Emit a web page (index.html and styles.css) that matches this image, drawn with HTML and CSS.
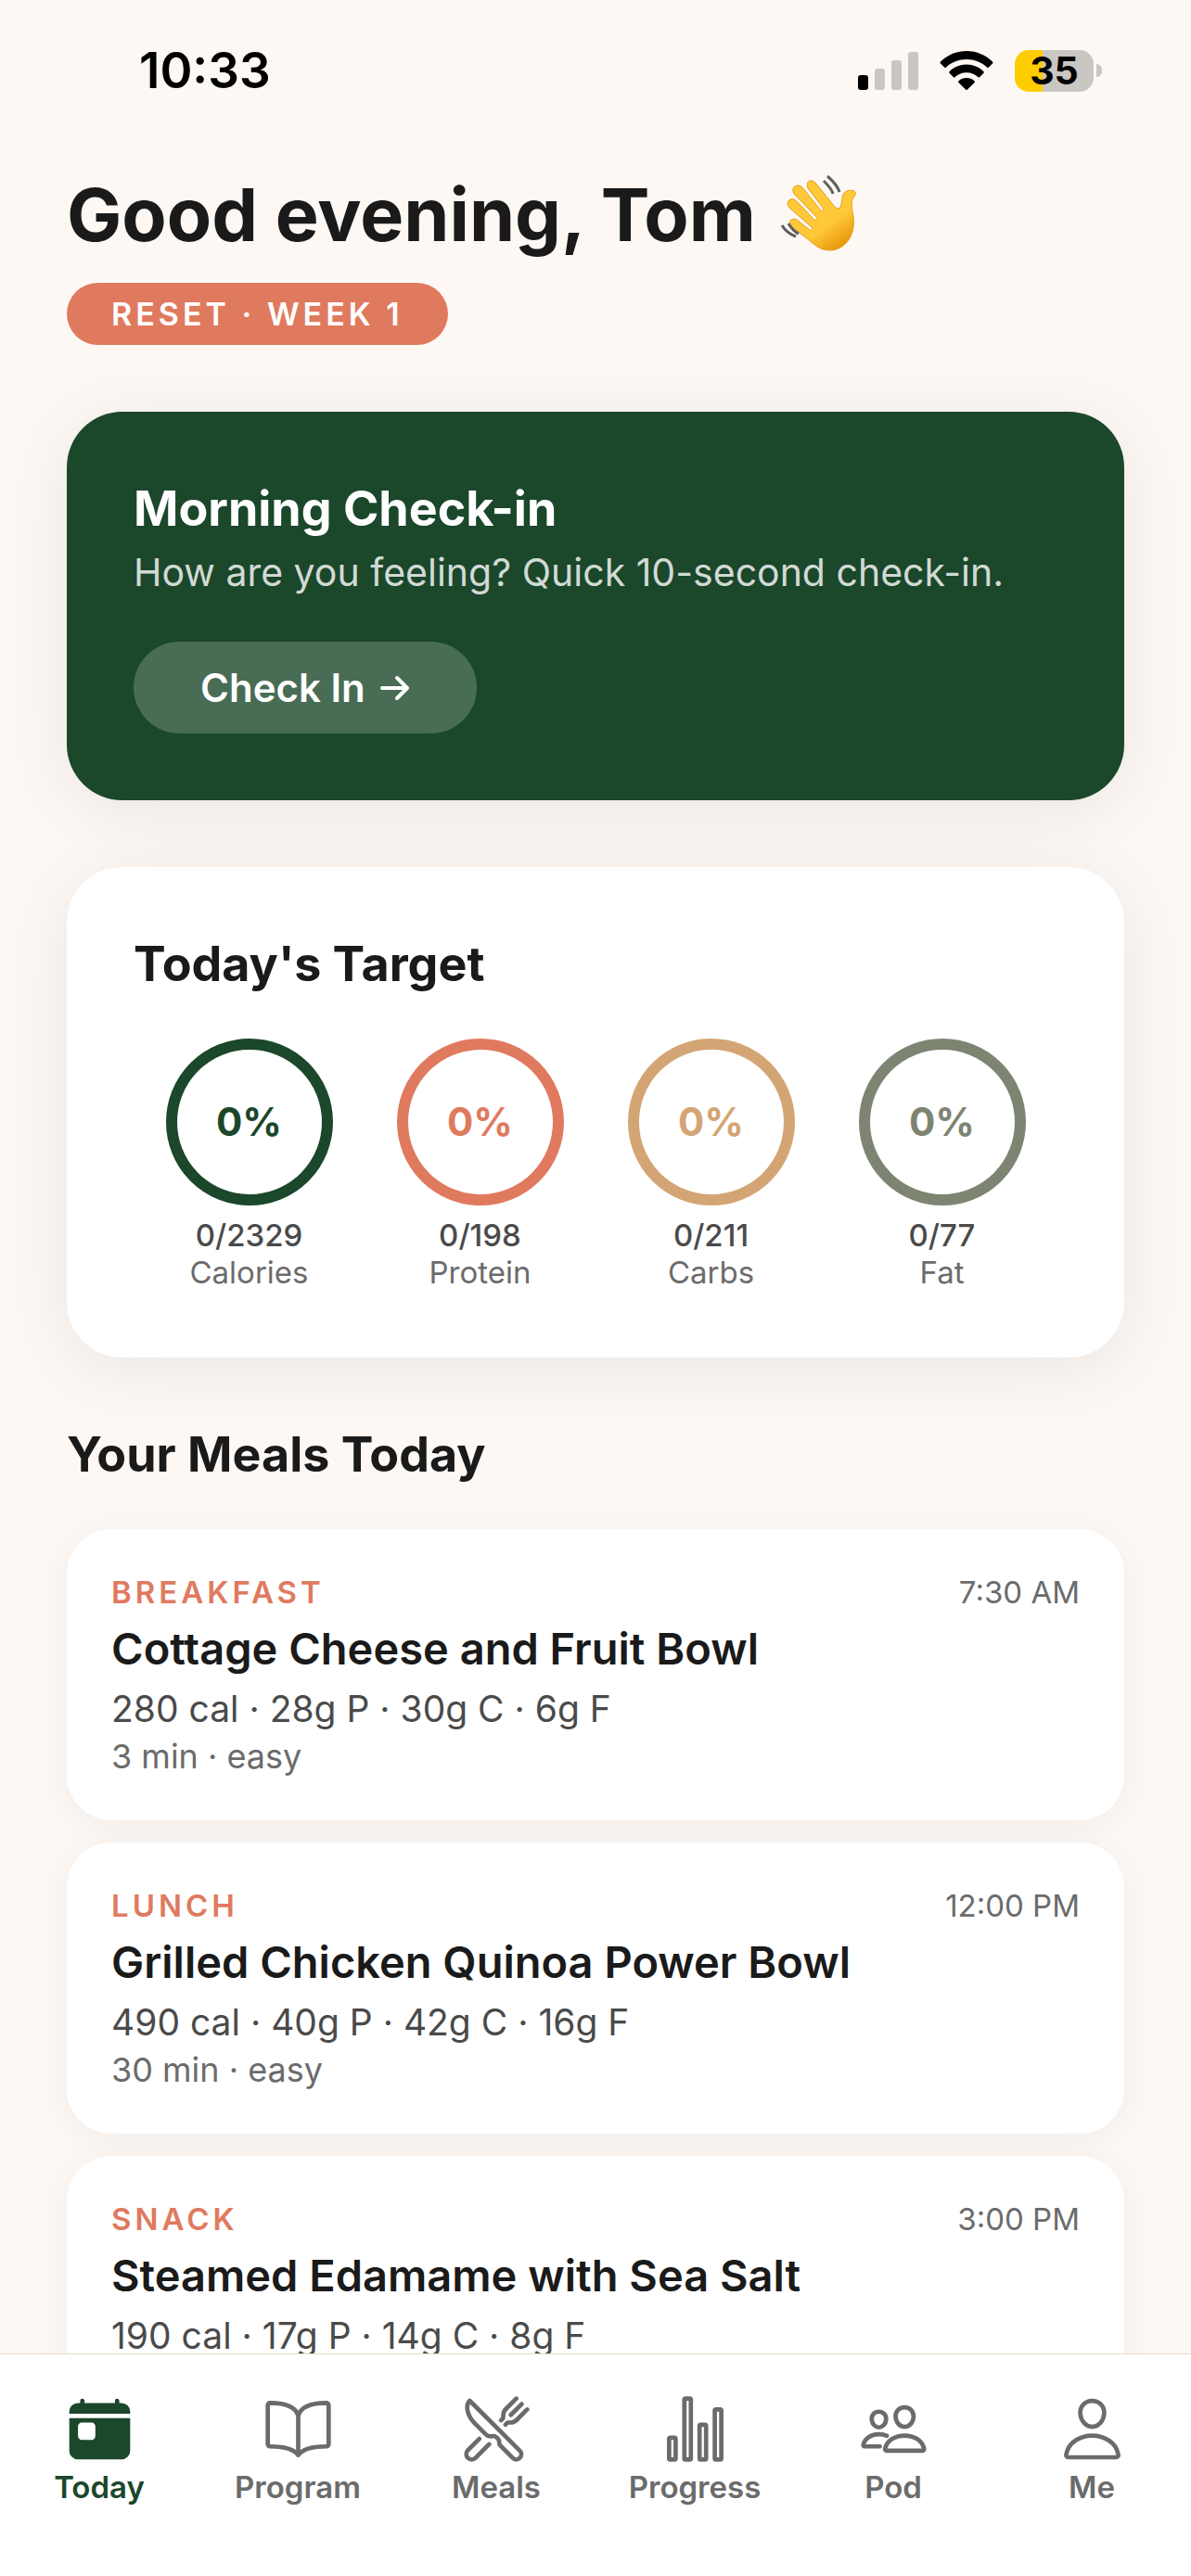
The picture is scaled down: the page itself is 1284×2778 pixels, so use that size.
FILE: index.html
```html
<!DOCTYPE html>
<html lang="en">
<head>
  <meta charset="UTF-8" />
  <meta name="viewport" content="width=device-width, initial-scale=1.0"/>
  <title>Today</title>
  <link rel="stylesheet" href="styles.css">
</head>
<body>
  <div class="app">
    <div class="status-bar">
      <span class="clock">10:33</span>
      <div class="status-icons">
        <svg class="signal" viewBox="0 0 65 41" aria-hidden="true">
          <rect class="on" x="0" y="25" width="11" height="16" rx="3"/>
          <rect x="18" y="18" width="11" height="23" rx="3"/>
          <rect x="36" y="9" width="11" height="32" rx="3"/>
          <rect x="54" y="0" width="11" height="41" rx="3"/>
        </svg>
        <svg class="wifi" viewBox="0 0 58 42" aria-hidden="true">
          <path d="M29 0C40 0 50 4.500 57 11.500Q58 12.500 57 13.500L53 17.500Q52 18.500 51 17.500C45 12 37.500 9 29 9S13 12 7 17.500Q6 18.500 5 17.500L1 13.500Q0 12.500 1 11.500C8 4.500 18 0 29 0Z"/>
          <path d="M29 14.500C36 14.500 42.500 17.300 47.300 22Q48.300 23 47.300 24L43.300 28Q42.300 29 41.300 28C38 25 33.700 23.300 29 23.300S20 25 16.700 28Q15.700 29 14.700 28L10.700 24Q9.700 23 10.700 22C15.500 17.300 22 14.500 29 14.500Z"/>
          <path d="M29 29C32.200 29 35.200 30.200 37.400 32.200Q38.400 33.200 37.400 34.200L30 41.500Q29 42.500 28 41.500L20.600 34.200Q19.600 33.200 20.600 32.200C22.800 30.200 25.800 29 29 29Z"/>
        </svg>
        <div class="battery"><span class="battery-level">35</span></div>
      </div>
    </div>

    <main class="content">
      <h1 class="greeting">Good evening, Tom
        <svg class="wave" viewBox="0 -6 84 84" role="img" aria-label="waving hand">
          <defs>
            <linearGradient id="skin" x1="0" y1="0" x2="0.7" y2="1">
              <stop offset="0" stop-color="#ffc935"/>
              <stop offset="0.7" stop-color="#ffc83a"/>
              <stop offset="1" stop-color="#e89a0c"/>
            </linearGradient>
          </defs>
          <path fill="url(#skin)" stroke="#e5a01c" stroke-width="1" d="M14 49C10 45 14 38.500 20 42L34 53C36 54 37.500 52 36 50L12 29C7 23 13 17 19 21L39 42C41 43 43 41 41 39L17 14C13 7 20 2 26 7L46 32C48 33 50 31 48 29L32 8C29 1 35-3 40 2L57 23C61 29 65 32 67 28C70 22 67 14 74 11C80 9 85 11 83 15C78 21 79 26 80 33C84 50 79 63 70 70C61 77 50 76 42 71Z"/>
          <path class="motion" d="M49 0C54 5 58 9 59 14M53-5C59 0 64 6 66 12M4 48C7 53 11 57 19 60M11 46C14 51 17 55 22 57"/>
        </svg>
      </h1>
      <span class="badge">RESET · WEEK 1</span>

      <section class="card checkin">
        <h2 class="checkin-title">Morning Check-in</h2>
        <p class="checkin-text">How are you feeling? Quick 10-second check-in.</p>
        <button type="button" class="checkin-btn">Check In
          <svg class="arrow" viewBox="0 0 32 30" aria-hidden="true"><path d="M2 15H29M18 4L29 15L18 26"/></svg>
        </button>
      </section>

      <section class="card">
        <h2 class="section-title">Today's Target</h2>
        <div class="rings">
          <div class="macro">
            <div class="ring green">0%</div>
            <span class="macro-value">0/2329</span>
            <span class="macro-label">Calories</span>
          </div>
          <div class="macro">
            <div class="ring coral">0%</div>
            <span class="macro-value">0/198</span>
            <span class="macro-label">Protein</span>
          </div>
          <div class="macro">
            <div class="ring sand">0%</div>
            <span class="macro-value">0/211</span>
            <span class="macro-label">Carbs</span>
          </div>
          <div class="macro">
            <div class="ring sage">0%</div>
            <span class="macro-value">0/77</span>
            <span class="macro-label">Fat</span>
          </div>
        </div>
      </section>

      <section class="meals">
        <h2 class="section-title">Your Meals Today</h2>
        <div class="meal-list">
          <article class="meal">
            <div class="meal-top">
              <span class="meal-type">BREAKFAST</span>
              <span class="meal-time">7:30 AM</span>
            </div>
            <h3 class="meal-name">Cottage Cheese and Fruit Bowl</h3>
            <p class="meal-macros">280 cal · 28g P · 30g C · 6g F</p>
            <p class="meal-prep">3 min · easy</p>
          </article>
          <article class="meal">
            <div class="meal-top">
              <span class="meal-type">LUNCH</span>
              <span class="meal-time">12:00 PM</span>
            </div>
            <h3 class="meal-name">Grilled Chicken Quinoa Power Bowl</h3>
            <p class="meal-macros">490 cal · 40g P · 42g C · 16g F</p>
            <p class="meal-prep">30 min · easy</p>
          </article>
          <article class="meal">
            <div class="meal-top">
              <span class="meal-type">SNACK</span>
              <span class="meal-time">3:00 PM</span>
            </div>
            <h3 class="meal-name">Steamed Edamame with Sea Salt</h3>
            <p class="meal-macros">190 cal · 17g P · 14g C · 8g F</p>
          </article>
        </div>
      </section>
    </main>

    <nav class="tab-bar">
      <a href="#today" class="tab active">
        <svg class="tab-icon filled" viewBox="0 0 512 512" aria-hidden="true">
          <path d="M416 64h-16V48.450c0-8.610-6.620-16-15.230-16.430A16 16 0 00368 48v16H144V48.450c0-8.610-6.620-16-15.230-16.430A16 16 0 00112 48v16H96a64 64 0 00-64 64v12a4 4 0 004 4h440a4 4 0 004-4v-12a64 64 0 00-64-64zM477 176H35a3 3 0 00-3 3v237a64 64 0 0064 64h320a64 64 0 0064-64V179a3 3 0 00-3-3zM224 307.430A28.570 28.570 0 01195.430 336h-70.860A28.570 28.570 0 0196 307.430v-70.860A28.570 28.570 0 01124.570 208h70.860A28.570 28.570 0 01224 236.570z"/>
        </svg>
        Today
      </a>
      <a href="#program" class="tab">
        <svg class="tab-icon" viewBox="0 0 512 512" aria-hidden="true">
          <path d="M256 160c16-63.160 76.430-95.410 208-96a15.940 15.940 0 0116 16v288a16 16 0 01-16 16c-128 0-177.450 25.810-208 64-30.370-38-80-64-208-64-9.880 0-16-8.050-16-17.930V80a15.940 15.940 0 0116-16c131.570.590 192 32.840 208 96zM256 160v288"/>
        </svg>
        Program
      </a>
      <a href="#meals" class="tab">
        <svg class="tab-icon" viewBox="0 0 512 512" aria-hidden="true">
          <path d="M57.490 47.740l368.430 368.430a37.280 37.280 0 010 52.720h0a37.290 37.290 0 01-52.720 0l-90-91.550a32 32 0 01-9.200-22.430v-5.530a32 32 0 00-9.520-22.780l-11.620-10.730a32 32 0 00-29.800-7.440h0a48.530 48.530 0 01-46.560-12.630l-85.430-85.440C40.390 159.680 21.740 83.150 57.490 47.740z"/>
          <path d="M400 32l-77.250 77.250A64 64 0 00304 154.510v14.860a16 16 0 01-4.690 11.320L288 192M320 224l11.310-11.310a16 16 0 0111.320-4.690h14.860a64 64 0 0045.260-18.750L480 112M440 72l-80 80M200 368l-99.720 100.280a40 40 0 01-56.560 0h0a40 40 0 010-56.560L128 328"/>
        </svg>
        Meals
      </a>
      <a href="#progress" class="tab">
        <svg class="tab-icon" viewBox="0 0 512 512" aria-hidden="true">
          <rect x="64" y="320" width="48" height="160" rx="8"/>
          <rect x="176" y="32" width="48" height="448" rx="8"/>
          <rect x="288" y="224" width="48" height="256" rx="8"/>
          <rect x="400" y="112" width="48" height="368" rx="8"/>
        </svg>
        Progress
      </a>
      <a href="#pod" class="tab">
        <svg class="tab-icon" viewBox="0 0 512 512" aria-hidden="true">
          <path d="M402 168c-2.930 40.670-33.100 72-66 72s-63.120-31.320-66-72c-3-42.310 26.370-72 66-72s69 30.460 66 72z"/>
          <path d="M336 304c-65.170 0-127.840 32.370-143.540 95.410-2.080 8.340 3.150 16.590 11.720 16.590h263.650c8.570 0 13.770-8.250 11.720-16.590C463.850 335.360 401.180 304 336 304z"/>
          <path d="M200 185.940c-2.340 32.480-26.720 58.060-53 58.060s-50.700-25.570-53-58.060C91.610 152.150 115.340 128 147 128s55.390 24.770 53 57.940z"/>
          <path d="M206 306c-18.050-8.270-37.930-11.450-59-11.450-52 0-102.100 25.850-114.650 76.200-1.650 6.660 2.530 13.250 9.370 13.250H154"/>
        </svg>
        Pod
      </a>
      <a href="#me" class="tab">
        <svg class="tab-icon" viewBox="0 0 512 512" aria-hidden="true">
          <path d="M344 144c-3.920 52.870-44 96-88 96s-84.150-43.120-88-96c-4-55 35-96 88-96s92 42 88 96z"/>
          <path d="M256 304c-87 0-175.300 48-191.640 138.600C62.390 453.520 68.570 464 80 464h352c11.440 0 17.620-10.480 15.650-21.400C431.300 352 343 304 256 304z"/>
        </svg>
        Me
      </a>
    </nav>
  </div>
</body>
</html>
```
FILE: styles.css
```css
* {
  box-sizing: border-box;
}

body, h1, h2, h3, p {
  margin: 0;
}

body {
  font-family: Inter, "Liberation Sans", sans-serif;
  background: #fdf8f4;
  color: #1a1a1a;
}

.app {
  display: flex;
  flex-direction: column;
  height: 100vh;
}

/* status bar */
.status-bar {
  display: flex;
  justify-content: space-between;
  align-items: center;
  height: 152px;
  padding: 0 96px 0 150px;
  flex-shrink: 0;
}

.clock {
  font-size: 53px;
  font-weight: 600;
  color: #000;
}

.status-icons {
  display: flex;
  align-items: center;
  gap: 23px;
}

.signal {
  width: 65px;
  height: 41px;
  fill: #cac6c1;
}

.signal .on {
  fill: #000;
}

.wifi {
  width: 58px;
  height: 42px;
}

.battery {
  display: flex;
  align-items: center;
  gap: 3px;
}

.battery::after {
  content: "";
  width: 6px;
  height: 14px;
  border-radius: 0 6px 6px 0;
  background: #cac6c1;
}

.battery-level {
  width: 85px;
  height: 45px;
  border-radius: 15px;
  background: linear-gradient(to right, #ffcc00 35%, #cac6c1 35%);
  color: #000;
  font-size: 41px;
  font-weight: 700;
  line-height: 45px;
  text-align: center;
}

/* page */
.content {
  flex: 1;
  min-height: 0;
  overflow-y: auto;
  scrollbar-width: none;
  padding: 28px 72px 72px;
}

.greeting {
  display: flex;
  align-items: center;
  gap: 24px;
  font-size: 79px;
  font-weight: 700;
  line-height: 102px;
}

.wave {
  width: 84px;
  height: 84px;
  overflow: visible;
}

.motion {
  fill: none;
  stroke: #5d605c;
  stroke-width: 3;
}

.badge {
  display: table;
  margin-top: 23px;
  padding: 12px 48px;
  border-radius: 34px;
  background: #e07a5f;
  color: #fff;
  font-size: 34px;
  font-weight: 600;
  line-height: 43px;
  letter-spacing: 4px;
}

.card {
  margin-top: 72px;
  padding: 72px;
  border-radius: 60px;
  background: #fff;
  box-shadow: 0 12px 72px rgba(0, 0, 0, 0.08);
}

.checkin {
  background: #1b472b;
  color: #fff;
}

.checkin-title {
  font-size: 52px;
  font-weight: 700;
  line-height: 66px;
}

.checkin-text {
  margin-top: 8px;
  font-size: 41px;
  line-height: 54px;
  color: #d1dad5;
}

.checkin-btn {
  display: flex;
  align-items: center;
  gap: 16px;
  height: 99px;
  margin-top: 48px;
  padding: 0 72px;
  border: none;
  border-radius: 50px;
  background: #496c55;
  color: #fff;
  font-family: inherit;
  font-size: 42px;
  font-weight: 600;
  cursor: pointer;
}

.arrow {
  width: 32px;
  height: 30px;
  fill: none;
  stroke: #fff;
  stroke-width: 4;
  stroke-linecap: round;
  stroke-linejoin: round;
}

.section-title {
  margin-bottom: 47px;
  font-size: 52px;
  font-weight: 700;
  line-height: 66px;
}

/* macro rings */
.rings {
  display: grid;
  grid-template-columns: repeat(4, 1fr);
}

.macro {
  display: flex;
  flex-direction: column;
  align-items: center;
  font-size: 33px;
  line-height: 40px;
}

.ring {
  display: flex;
  align-items: center;
  justify-content: center;
  width: 180px;
  height: 180px;
  margin-bottom: 12px;
  border: 12px solid;
  border-radius: 50%;
  font-size: 42px;
  font-weight: 700;
}

.green { color: #1b472b; }
.coral { color: #e07a5f; }
.sand { color: #d4a574; }
.sage { color: #7d8471; }

.macro-value {
  font-weight: 500;
  color: #4a4a4a;
}

.macro-label {
  color: #6b6b6b;
}

/* meals */
.meals {
  margin-top: 72px;
}

.meal-list {
  display: flex;
  flex-direction: column;
  gap: 24px;
}

.meal {
  padding: 48px;
  border-radius: 48px;
  background: #fff;
  box-shadow: 0 6px 36px rgba(0, 0, 0, 0.05);
}

.meal-top {
  display: flex;
  justify-content: space-between;
  font-size: 33px;
  line-height: 40px;
}

.meal-type {
  font-weight: 600;
  letter-spacing: 4px;
  color: #e07a5f;
}

.meal-time {
  color: #6b6b6b;
}

.meal-name {
  margin-top: 12px;
  font-size: 47px;
  font-weight: 600;
  line-height: 58px;
}

.meal-macros {
  margin-top: 12px;
  font-size: 39px;
  line-height: 48px;
  color: #4a4a4a;
}

.meal-prep {
  margin-top: 6px;
  font-size: 36px;
  line-height: 42px;
  color: #6b6b6b;
}

/* bottom tabs */
.tab-bar {
  display: grid;
  grid-template-columns: repeat(6, 1fr);
  padding: 43px 0 76px;
  border-top: 1px solid #e8dcc4;
  background: #fff;
  flex-shrink: 0;
}

.tab {
  display: flex;
  flex-direction: column;
  align-items: center;
  gap: 5px;
  color: #6b6b6b;
  font-size: 33px;
  font-weight: 600;
  line-height: 40px;
  text-decoration: none;
}

.tab.active {
  color: #1b472b;
}

.tab-icon {
  width: 75px;
  height: 75px;
  fill: none;
  stroke: currentColor;
  stroke-width: 32;
  stroke-linecap: round;
  stroke-linejoin: round;
}

.tab-icon.filled {
  fill: currentColor;
  stroke: none;
}
```
